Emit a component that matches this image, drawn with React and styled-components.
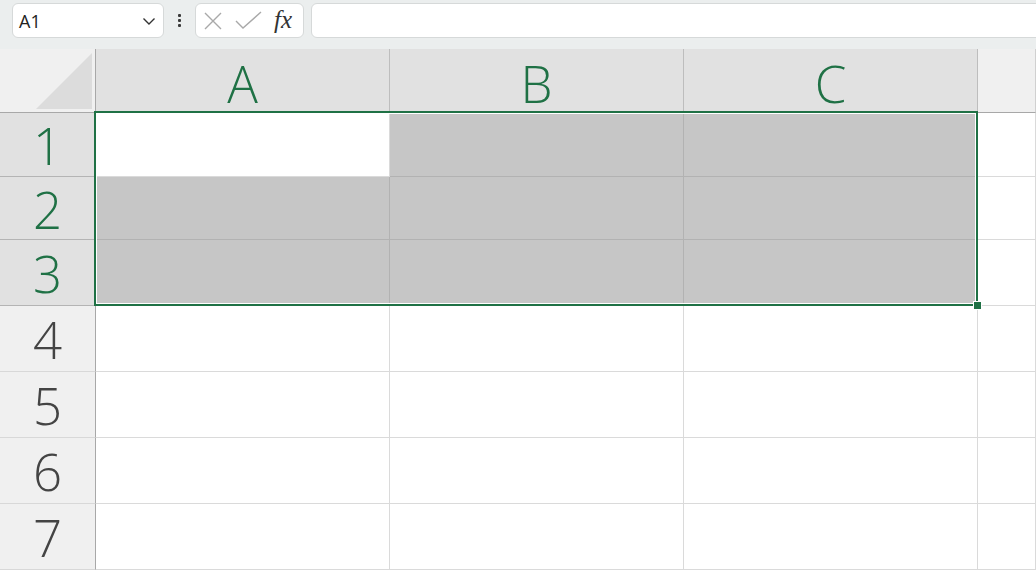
import React from 'react'
import styled, { createGlobalStyle } from 'styled-components'

const GlobalStyle = createGlobalStyle`
    html, body {
        margin: 0;
        padding: 0;
        background: #ffffff;
        overflow: hidden;
    }
    * {
        box-sizing: border-box;
    }
`

const GREEN = '#1f7145'

const Page = styled.div`
    width: 1036px;
    height: 570px;
    display: flex;
    flex-direction: column;
    font-family: "Open Sans", "Noto Sans", sans-serif;
    overflow: hidden;
`

const Toolbar = styled.div`
    height: 49px;
    flex: none;
    background: #ebeeee;
    display: flex;
    align-items: flex-start;
    padding: 3px 0 0 12px;
`

const NameBox = styled.div`
    width: 152px;
    height: 35px;
    background: #ffffff;
    border: 1px solid #d6d9d9;
    border-radius: 6px;
    display: flex;
    align-items: center;
    justify-content: space-between;
    padding: 0 6px 0 6px;
    color: #222;

    span {
        font-size: 18px;
        line-height: 1;
    }
`

const Dots = styled.div`
    width: 31px;
    height: 35px;
    display: flex;
    flex-direction: column;
    align-items: center;
    justify-content: center;
    gap: 2px;

    span {
        width: 3px;
        height: 3px;
        border-radius: 1px;
        background: #3a3a3a;
    }
`

const FxBox = styled.div`
    width: 109px;
    height: 35px;
    background: #ffffff;
    border: 1px solid #d6d9d9;
    border-radius: 6px;
    display: flex;
    align-items: center;
    padding: 0 0 0 7px;
    gap: 12px;
`

const Fx = styled.span`
    font-family: "Liberation Serif", "DejaVu Serif", serif;
    font-style: italic;
    font-size: 25px;
    line-height: 1;
    color: #333;
    margin-top: -2px;
`

const FormulaInput = styled.div`
    flex: 1;
    height: 35px;
    margin-left: 7px;
    margin-right: -10px;
    background: #ffffff;
    border: 1px solid #d6d9d9;
    border-radius: 6px;
`

const Sheet = styled.div`
    position: relative;
    flex: 1;
    display: grid;
    grid-template-columns: 96px 294px 294px 294px 1fr;
    grid-template-rows: 64px 64px 63px 66px 66px 66px 66px 66px;
`

const Corner = styled.div`
    background: #f0f0f0;
    border-right: 1px solid #a8a8a8;
    border-bottom: 1px solid #a8a8a8;
    display: flex;
    align-items: flex-end;
    justify-content: flex-end;
    padding: 0 3px 3px 0;
`

const ColHead = styled.div`
    background: ${p => (p.$sel ? '#e1e1e1' : '#f0f0f0')};
    border-right: 1px solid ${p => (p.$sel ? '#bdbdbd' : '#d0d0d0')};
    border-bottom: 1px solid #a8a8a8;
    display: flex;
    align-items: center;
    justify-content: center;
    padding-top: 6px;
    font-size: 51px;
    font-weight: 300;
    line-height: 1;
    color: ${p => (p.$sel ? GREEN : '#444')};
`

const RowHead = styled.div`
    background: ${p => (p.$sel ? '#e1e1e1' : '#f0f0f0')};
    border-right: 1px solid #a8a8a8;
    border-bottom: 1px solid ${p => (p.$sel ? '#b4b4b4' : '#d8d8d8')};
    display: flex;
    align-items: center;
    justify-content: center;
    padding-top: 2px;
    font-size: 51px;
    font-weight: 300;
    line-height: 1;
    color: ${p => (p.$sel ? GREEN : '#444')};
`

const Cell = styled.div`
    background: ${p => (p.$sel ? '#c6c6c6' : '#ffffff')};
    border-right: 1px solid ${p => (p.$sel ? '#b2b2b2' : '#dadada')};
    border-bottom: 1px solid ${p => (p.$sel ? '#b2b2b2' : '#dadada')};
`

const Selection = styled.div`
    position: absolute;
    left: 94px;
    top: 62px;
    width: 884px;
    height: 195px;
    border: 2px solid ${GREEN};
    box-shadow: inset 0 0 0 1px #ffffff;
    pointer-events: none;
`

const Handle = styled.div`
    position: absolute;
    right: -6px;
    bottom: -6px;
    width: 9px;
    height: 9px;
    background: ${GREEN};
    border: 1px solid #ffffff;
`

const cols = ['A', 'B', 'C']
const rows = [1, 2, 3, 4, 5, 6, 7]

const App = () => {
    return (
        <>
            <GlobalStyle />
            <Page>
                <Toolbar>
                    <NameBox>
                        <span>A1</span>
                        <svg width="16" height="16" viewBox="0 0 16 16">
                            <path d="M2.5 5.5 L8 11 L13.5 5.5" fill="none" stroke="#333" strokeWidth="1.4" />
                        </svg>
                    </NameBox>
                    <Dots>
                        <span />
                        <span />
                        <span />
                    </Dots>
                    <FxBox>
                        <svg width="20" height="20" viewBox="0 0 20 20">
                            <path d="M2 2 L18 18 M18 2 L2 18" stroke="#a9a9a9" strokeWidth="1.4" />
                        </svg>
                        <svg width="27" height="20" viewBox="0 0 27 20">
                            <path d="M1 10 L8 17 L26 1" fill="none" stroke="#a9a9a9" strokeWidth="1.4" />
                        </svg>
                        <Fx>fx</Fx>
                    </FxBox>
                    <FormulaInput />
                </Toolbar>
                <Sheet>
                    <Corner>
                        <svg width="56" height="56" viewBox="0 0 56 56">
                            <path d="M0 56 L56 0 L56 56 Z" fill="#dcdcdc" />
                        </svg>
                    </Corner>
                    {cols.map(c => (
                        <ColHead key={c} $sel>{c}</ColHead>
                    ))}
                    <ColHead />
                    {rows.map(r => (
                        <React.Fragment key={r}>
                            <RowHead $sel={r <= 3}>{r}</RowHead>
                            {cols.map((c, i) => (
                                <Cell key={c} $sel={r <= 3 && !(r === 1 && i === 0)} />
                            ))}
                            <Cell />
                        </React.Fragment>
                    ))}
                    <Selection>
                        <Handle />
                    </Selection>
                </Sheet>
            </Page>
        </>
    )
}

export default App
